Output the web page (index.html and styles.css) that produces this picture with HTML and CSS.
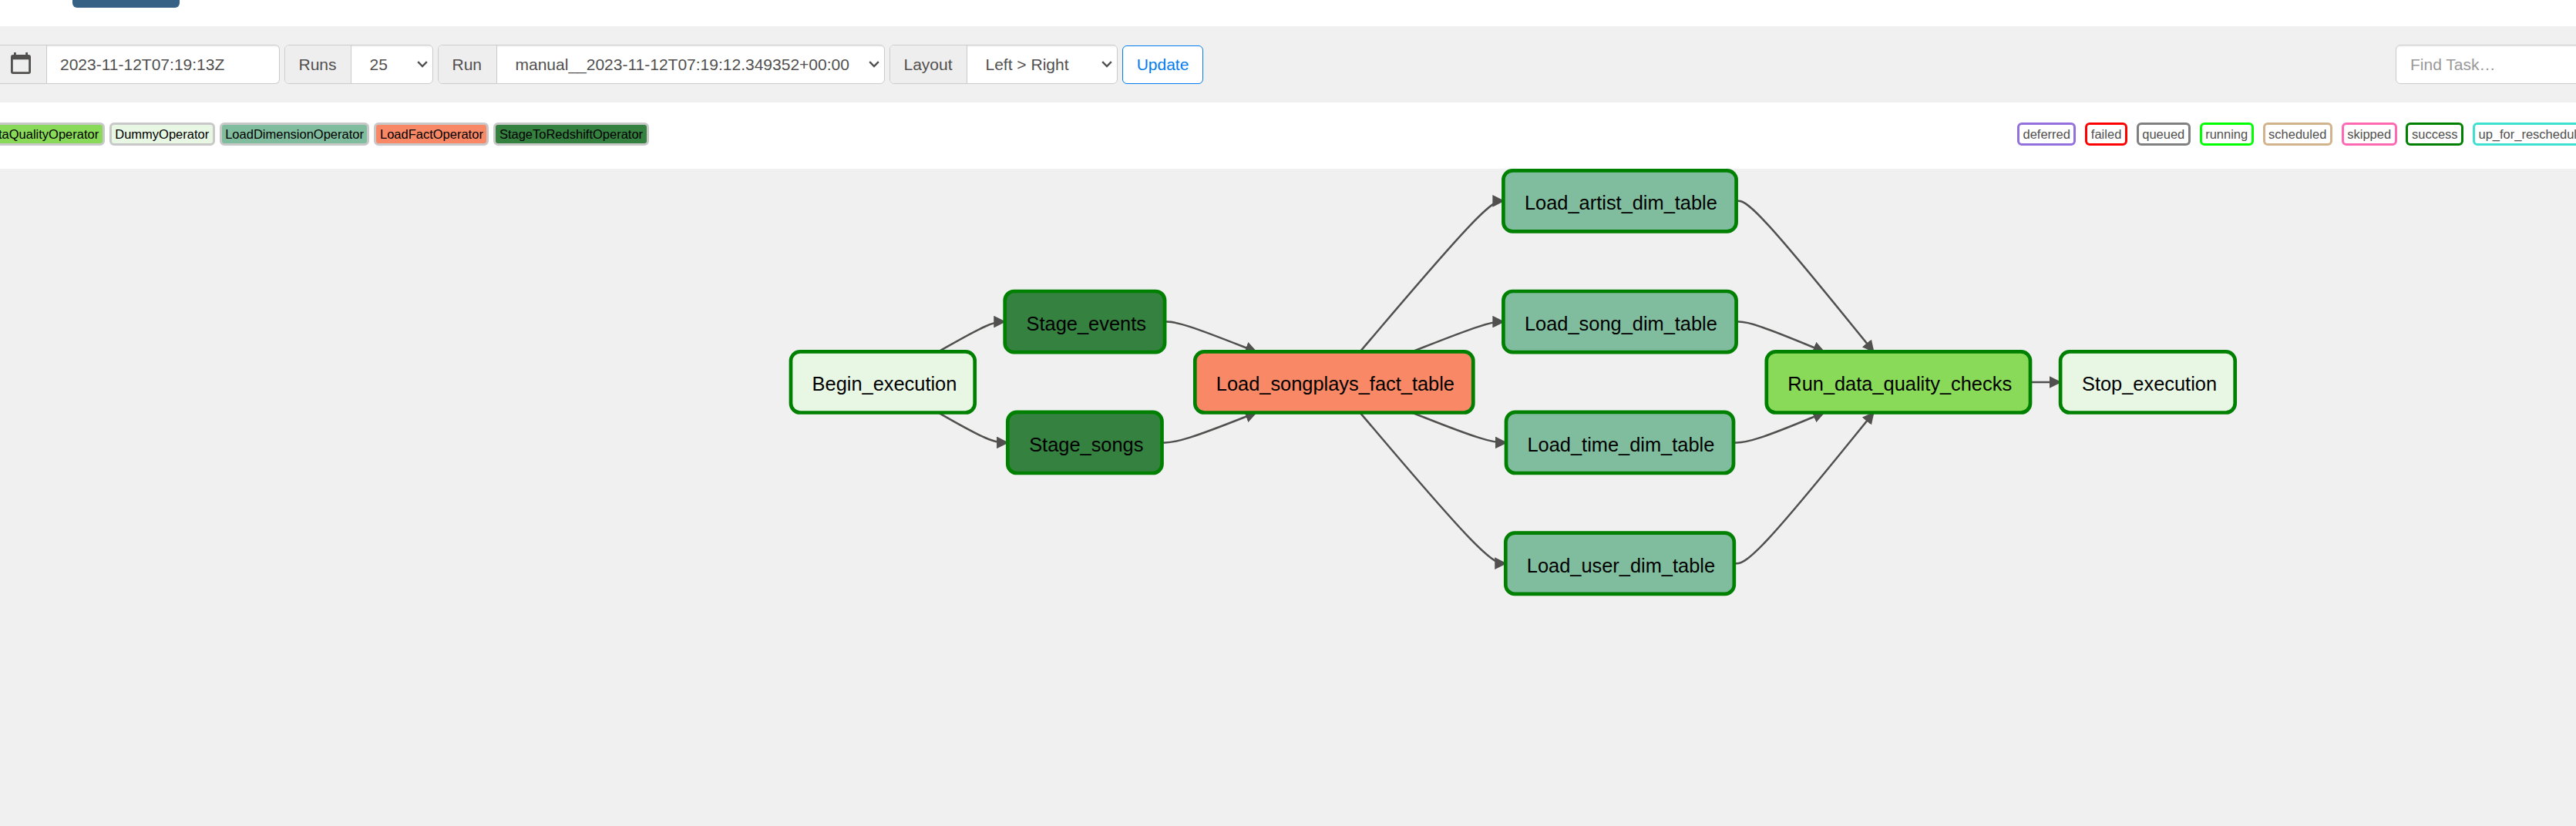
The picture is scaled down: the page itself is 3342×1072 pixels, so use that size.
FILE: index.html
```html
<!DOCTYPE html>
<html lang="en">
<head>
<meta charset="utf-8">
<title>DAG graph</title>
<link rel="stylesheet" href="styles.css">
</head>
<body>
<header class="tabs"><div class="tab-active"></div></header>
<form class="toolbar">
  <div class="group group-date">
    <span class="addon addon-icon"><svg class="calendar" viewBox="0 0 26 28"><path fill-rule="evenodd" d="M4 0h2.800v3h12.400V0H22v3h1a3 3 0 0 1 3 3v19a3 3 0 0 1-3 3H3a3 3 0 0 1-3-3V6a3 3 0 0 1 3-3h1zM2.800 9.200v16h20.400v-16z"/></svg></span>
    <span class="field field-date">2023-11-12T07:19:13Z</span>
  </div>
  <div class="group group-runs">
    <span class="addon addon-runs">Runs</span>
    <span class="field select">25<svg class="chevron" viewBox="0 0 14 9"><path d="M1.200 1.200 7 7l5.800-5.800"/></svg></span>
  </div>
  <div class="group group-run">
    <span class="addon addon-run">Run</span>
    <span class="field select">manual__2023-11-12T07:19:12.349352+00:00<svg class="chevron" viewBox="0 0 14 9"><path d="M1.200 1.200 7 7l5.800-5.800"/></svg></span>
  </div>
  <div class="group group-layout">
    <span class="addon addon-layout">Layout</span>
    <span class="field select">Left &gt; Right<svg class="chevron" viewBox="0 0 14 9"><path d="M1.200 1.200 7 7l5.800-5.800"/></svg></span>
  </div>
  <button class="update" type="button">Update</button>
  <div class="search">Find Task…</div>
</form>
<section class="legend">
  <div class="operators">
    <span class="tag op quality">DataQualityOperator</span>
    <span class="tag op dummy">DummyOperator</span>
    <span class="tag op dimension">LoadDimensionOperator</span>
    <span class="tag op fact">LoadFactOperator</span>
    <span class="tag op stage">StageToRedshiftOperator</span>
  </div>
  <div class="states">
    <span class="tag deferred">deferred</span>
    <span class="tag failed">failed</span>
    <span class="tag queued">queued</span>
    <span class="tag running">running</span>
    <span class="tag scheduled">scheduled</span>
    <span class="tag skipped">skipped</span>
    <span class="tag success">success</span>
    <span class="tag reschedule">up_for_reschedule</span>
  </div>
</section>
<main class="graph">
  <svg class="canvas" viewBox="0 219 3342 853">
    <defs>
      <marker id="arrow" viewBox="0 0 10 10" refX="9" refY="5" markerUnits="userSpaceOnUse" markerWidth="15.700" markerHeight="15.700" orient="auto"><path class="head" d="M0 0 10 5 0 10z"/></marker>
    </defs>
    <g class="edges">
      <path d="M1217.500 456.400L1228.900 449.900C1240.300 443.400 1263.200 430.500 1277.400 424C1291.700 417.600 1297.300 417.600 1300.200 417.600L1303.400 417.600"/>
      <path d="M1217.500 535.600L1228.900 542.100C1240.300 548.600 1263.200 561.500 1277.900 568C1292.700 574.400 1298.600 574.400 1304 574.400L1307.200 574.400"/>
      <path d="M1511 417.600L1514.300 417.600C1517.600 417.600 1524.100 417.600 1543.900 424.100C1563.700 430.500 1596.700 443.500 1613.200 450L1629.700 456.400"/>
      <path d="M1507.400 574.400L1511.300 574.400C1515.200 574.400 1522.900 574.400 1543.300 567.900C1563.700 561.500 1596.700 548.500 1613.200 542L1629.700 535.600"/>
      <path d="M1764.500 456.400L1792.300 423.800C1820 391.200 1875.500 326 1906.500 293.400C1937.500 260.800 1944 260.800 1947.200 260.800L1950.500 260.800"/>
      <path d="M1831.900 456.400L1848.400 450C1864.900 443.500 1898 430.500 1917.700 424.100C1937.500 417.600 1944 417.600 1947.200 417.600L1950.500 417.600"/>
      <path d="M1831.900 535.600L1848.400 542C1864.900 548.500 1898 561.500 1918.300 567.900C1938.700 574.400 1946.400 574.400 1950.200 574.400L1954.100 574.400"/>
      <path d="M1764.500 535.600L1792.300 568.200C1820 600.800 1875.500 666 1906.900 698.600C1938.400 731.200 1945.900 731.200 1949.600 731.200L1953.400 731.200"/>
      <path d="M2252.500 260.800L2255.800 260.800C2259 260.800 2265.500 260.800 2295.200 293.400C2324.900 326 2377.800 391.200 2404.200 423.800L2430.700 456.400"/>
      <path d="M2252.500 417.600L2255.800 417.600C2259 417.600 2265.500 417.600 2284.500 424.100C2303.500 430.500 2335 443.500 2350.700 450L2366.400 456.400"/>
      <path d="M2248.900 574.400L2252.800 574.400C2256.600 574.400 2264.300 574.400 2283.900 567.900C2303.500 561.500 2335 548.500 2350.700 542L2366.400 535.600"/>
      <path d="M2249.600 731.200L2253.300 731.200C2257.100 731.200 2264.500 731.200 2294.700 698.600C2324.900 666 2377.800 600.800 2404.200 568.200L2430.700 535.600"/>
      <path d="M2633.800 496L2673.100 496"/>
    </g>
    <g class="nodes">
      <rect class="dummy" x="1026" y="456.300" width="238.700" height="79.200" rx="12"/><text x="1053.600" y="507">Begin_execution</text>
      <rect class="stage" x="1303.700" y="378" width="207.400" height="79.200" rx="12"/><text x="1331.600" y="428.800">Stage_events</text>
      <rect class="stage" x="1307.300" y="534.800" width="200.200" height="79.200" rx="12"/><text x="1335.200" y="585.600">Stage_songs</text>
      <rect class="fact" x="1550.300" y="456.300" width="361" height="79.200" rx="12"/><text x="1577.800" y="507">Load_songplays_fact_table</text>
      <rect class="dimension" x="1950.400" y="221.400" width="302.200" height="79" rx="12"/><text x="1978" y="272">Load_artist_dim_table</text>
      <rect class="dimension" x="1950.400" y="378" width="302.200" height="79.200" rx="12"/><text x="1978" y="428.800">Load_song_dim_table</text>
      <rect class="dimension" x="1954" y="534.800" width="295" height="79.200" rx="12"/><text x="1981.500" y="585.600">Load_time_dim_table</text>
      <rect class="dimension" x="1953.300" y="691.600" width="296.500" height="79.200" rx="12"/><text x="1980.800" y="742.500">Load_user_dim_table</text>
      <rect class="quality" x="2291.800" y="456.300" width="342.200" height="79.200" rx="12"/><text x="2319.300" y="507">Run_data_quality_checks</text>
      <rect class="dummy" x="2673.100" y="456.300" width="226.600" height="79.200" rx="12"/><text x="2701" y="507">Stop_execution</text>
    </g>
  </svg>
</main>
</body>
</html>
```
FILE: styles.css
```css
* { box-sizing: border-box; }
body {
  margin: 0;
  height: 1072px;
  overflow: hidden;
  display: flex;
  flex-direction: column;
  background: #fff;
  color: #51504f;
  font-family: "Liberation Sans", Arial, sans-serif;
  font-size: 21px;
}
.tabs { height: 34px; padding-left: 94px; flex: none; }
.tab-active { width: 139px; height: 10px; background: #366084; border-radius: 0 0 6px 6px; }
.toolbar {
  flex: none;
  display: flex;
  align-items: center;
  gap: 6px;
  height: 99px;
  background: #f0f0f0;
  overflow: hidden;
}
.group {
  flex: none;
  display: flex;
  height: 51px;
  border: 1px solid #ccc;
  border-radius: 6px;
  background: #fff;
  overflow: hidden;
}
.group-date { width: 363px; border-left: 0; border-top-left-radius: 0; border-bottom-left-radius: 0; }
.group-runs { width: 193px; }
.group-run { width: 580px; }
.group-layout { width: 296px; }
.addon {
  flex: none;
  display: flex;
  align-items: center;
  padding-left: 17.500px;
  background: #eee;
  border-right: 1px solid #ccc;
}
.addon-icon { width: 61px; padding-left: 14px; }
.addon-runs { width: 86px; }
.addon-run { width: 76px; }
.addon-layout { width: 100px; }
.calendar { width: 26px; height: 28px; fill: #51504f; margin-top: -3px; }
.field {
  flex: 1;
  display: flex;
  align-items: center;
  justify-content: space-between;
  white-space: nowrap;
  box-shadow: inset 0 1.500px 1.500px rgba(0, 0, 0, .075);
}
.field-date { padding-left: 17px; }
.select { padding: 0 6px 0 23.500px; }
.chevron { width: 14px; height: 9px; fill: none; stroke: #51504f; stroke-width: 2.400; }
.update {
  flex: none;
  width: 105px;
  height: 50px;
  margin-top: 1px;
  padding: 0;
  border: 1px solid #017cee;
  border-radius: 6px;
  background: #fff;
  color: #017cee;
  font: inherit;
}
.search {
  flex: none;
  width: 300px;
  height: 51px;
  margin: 0 -66px 0 auto;
  padding-left: 18px;
  border: 1px solid #ccc;
  border-radius: 6px;
  background: #fff;
  color: #999;
  line-height: 49px;
  box-shadow: inset 0 1.500px 1.500px rgba(0, 0, 0, .075);
}
.legend {
  flex: none;
  display: flex;
  justify-content: space-between;
  height: 86px;
  padding-top: 26px;
  overflow: hidden;
  font-size: 16.500px;
}
.operators { display: flex; gap: 6px; margin-left: -30.600px; color: #000; }
.states { display: flex; gap: 11.900px; width: 725px; }
.tag {
  flex: none;
  height: 30px;
  padding: 0 4.500px;
  border: 3px solid;
  border-radius: 6px;
  line-height: 24px;
  white-space: nowrap;
}
.tag.op { border-color: #c8c8c8; }
.tag.quality { background: #89da59; }
.tag.dummy { background: #e8f7e4; }
.tag.dimension { background: #80bd9e; }
.tag.fact { background: #f98866; }
.tag.stage { background: #358140; }
.deferred { border-color: mediumpurple; }
.failed { border-color: red; }
.queued { border-color: gray; }
.running { border-color: lime; }
.scheduled { border-color: tan; }
.skipped { border-color: hotpink; }
.success { border-color: green; }
.reschedule { border-color: turquoise; }
.graph { flex: 1; background: #f0f0f0; }
.canvas { display: block; width: 3342px; height: 853px; }
.edges path { fill: none; stroke: #51504f; stroke-width: 2.500; marker-end: url(#arrow); }
.head { fill: #51504f; }
.nodes rect { stroke: green; stroke-width: 4.700; }
.nodes text { font-size: 25.400px; fill: #000; }
rect.quality { fill: #89da59; }
rect.dummy { fill: #e8f7e4; }
rect.dimension { fill: #80bd9e; }
rect.fact { fill: #f98866; }
rect.stage { fill: #358140; }
```
